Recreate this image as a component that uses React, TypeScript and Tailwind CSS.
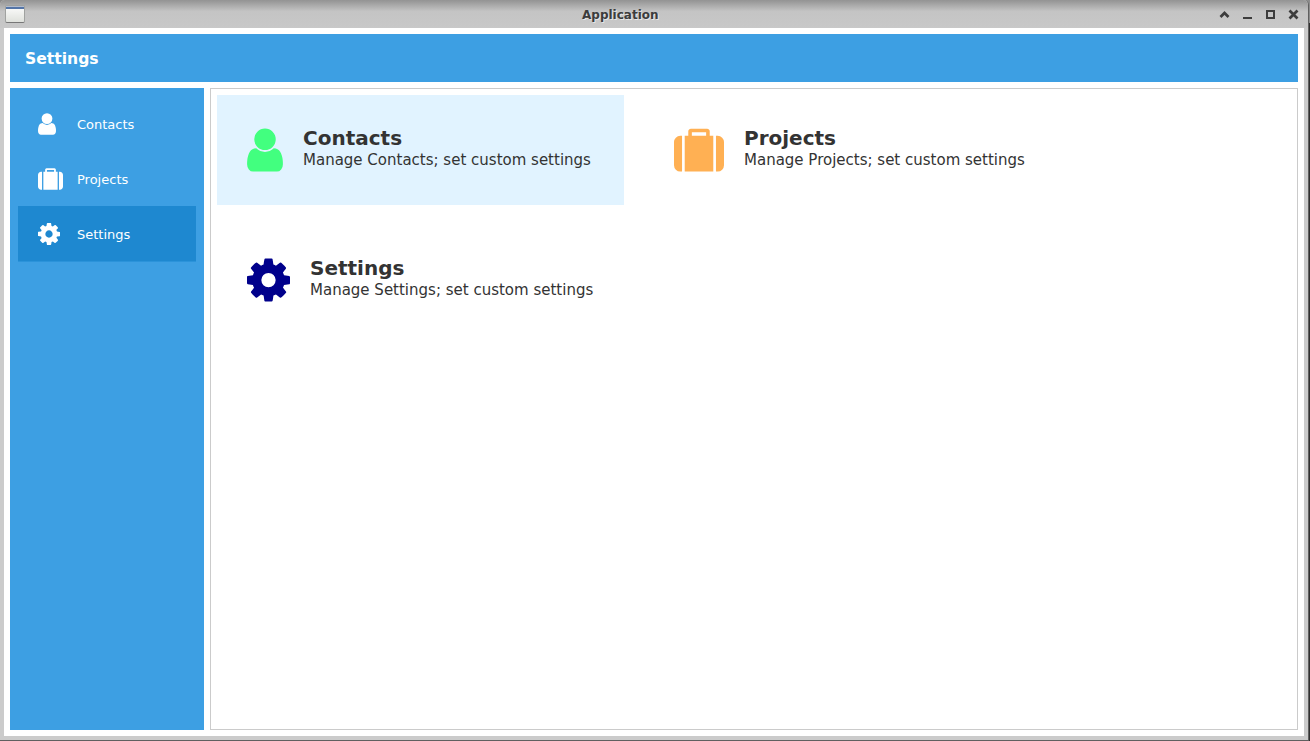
import type { ReactNode } from "react";

type IconName = "user" | "suitcase" | "cog";

const icons: Record<IconName, { viewBox: string; d: string; flip?: boolean }> = {
  user: {
    viewBox: "256 128 1280 1536",
    d: "M1536 1399q0 109-62.5 187t-150.5 78h-854q-88 0-150.5-78t-62.5-187q0-85 8.5-160.5t31.5-152 58.5-131 94-89 134.5-34.5q131 128 313 128t313-128q76 0 134.5 34.5t94 89 58.5 131 31.5 152 8.5 160.5zm-256-887q0 159-112.5 271.5t-271.5 112.5-271.5-112.5-112.5-271.5 112.5-271.5 271.5-112.5 271.5 112.5 112.5 271.5z",
  },
  suitcase: {
    viewBox: "0 0 1792 1536",
    flip: true,
    d: "M640 1152h512v128h-512v-128zM288 1152v-1280h-64q-92 0-158 66t-66 158v832q0 92 66 158t158 66h64zM1408 1152v-1280h-1024v1280h128v160q0 40 28 68t68 28h576q40 0 68-28t28-68v-160h128zM1792 928v-832q0-92-66-158t-158-66h-64v1280h64q92 0 158-66t66-158z",
  },
  cog: {
    viewBox: "128 128 1536 1536",
    d: "M1152 896q0-106-75-181t-181-75-181 75-75 181 75 181 181 75 181-75 75-181zm512-109v222q0 12-8 23t-20 13l-185 28q-19 54-39 91 35 50 107 138 10 12 10 25t-9 23q-27 37-99 108t-94 71q-12 0-26-9l-138-108q-44 23-91 38-16 136-29 186-7 28-36 28h-222q-14 0-24.5-8.5t-11.5-21.5l-28-184q-49-16-90-37l-141 107q-10 9-25 9-14 0-25-11-126-114-165-168-7-10-7-23 0-12 8-23 15-21 51-66.5t54-70.5q-27-50-41-99l-183-27q-13-2-21-12.5t-8-23.5v-222q0-12 8-23t19-13l186-28q14-46 39-92-40-57-107-138-10-12-10-24 0-10 9-23 26-36 98.5-107.5t94.5-71.5q13 0 26 10l138 107q44-23 91-38 16-136 29-186 7-28 36-28h222q14 0 24.5 8.5t11.5 21.5l28 184q49 16 90 37l142-107q9-9 24-9 13 0 25 10 129 119 165 170 7 8 7 22 0 12-8 23-15 21-51 66.5t-54 70.5q26 50 41 98l183 28q13 2 21 12.5t8 23.5z",
  },
};

function Icon({ name, className }: { name: IconName; className: string }) {
  const icon = icons[name];
  return (
    <svg viewBox={icon.viewBox} className={`shrink-0 overflow-visible fill-current ${className}`} aria-hidden="true">
      <path d={icon.d} transform={icon.flip ? "translate(0 1408) scale(1 -1)" : undefined} />
    </svg>
  );
}

function WindowButton({ label, children }: { label: string; children: ReactNode }) {
  return (
    <button aria-label={label} className="flex h-[11px] w-[11px] items-center justify-center text-[#3c3c3c]">
      <svg viewBox="0 0 11 11" className="h-[11px] w-[11px]" fill="none" stroke="currentColor" strokeWidth="2">
        {children}
      </svg>
    </button>
  );
}

function TitleBar() {
  return (
    <header className="flex h-7 shrink-0 items-center rounded-t-[5px] bg-linear-to-b from-[#939393] via-[#c4c4c4] via-40% to-[#c8c8c8] pr-[9px] pl-[5px]">
      <div className="flex w-[577px]">
        <div className="h-[18px] w-5 rounded-[2px] border border-[#a0a2a0] border-b-[#777] bg-linear-to-b from-[#fdfdfd] to-[#dfe1dc]">
          <div className="h-[3px] border-t border-[#b4bccb] bg-[#5475a8]" />
        </div>
      </div>
      <h1 className="grow pt-0.5 text-[12px] leading-4 font-bold text-[#3c3c3c] [text-shadow:1px_1px_0_#e6e6e6]">Application</h1>
      <div className="mt-px flex w-[80px] gap-3">
        <WindowButton label="Shade">
          <path d="M1.5 8 5.5 4 9.5 8" strokeWidth="2.7" />
        </WindowButton>
        <WindowButton label="Minimize">
          <path d="M1 9h9" />
        </WindowButton>
        <WindowButton label="Maximize">
          <path d="M2 2h7v7h-7z" />
        </WindowButton>
        <WindowButton label="Close">
          <path d="M1.5 1.5 9.5 9.5M9.5 1.5 1.5 9.5" strokeWidth="2.7" />
        </WindowButton>
      </div>
    </header>
  );
}

const navItems: { label: string; icon: IconName; size: string; active?: boolean }[] = [
  { label: "Contacts", icon: "user", size: "h-[22px] w-[18px]" },
  { label: "Projects", icon: "suitcase", size: "h-[22px] w-[25px]" },
  { label: "Settings", icon: "cog", size: "h-[22px] w-[22px]", active: true },
];

function Sidebar() {
  return (
    <nav className="w-[194px] shrink-0 bg-[#3d9fe3] px-2 pt-2">
      {navItems.map((item) => (
        <a
          key={item.label}
          className={`flex h-[55px] items-center pl-5 text-white ${item.active ? "box-content border-b border-[#2b93da] bg-[#1e88d0]" : ""}`}
        >
          <span className="flex w-[39px]">
            <Icon name={item.icon} className={item.size} />
          </span>
          <span className="pt-0.5 text-[13px] leading-4">{item.label}</span>
        </a>
      ))}
    </nav>
  );
}

const tiles: { title: string; icon: IconName; look: string; active?: boolean }[] = [
  { title: "Contacts", icon: "user", look: "h-[43px] w-[36px] text-[#42ff7f]", active: true },
  { title: "Projects", icon: "suitcase", look: "h-[43px] w-[50px] text-[#ffb053]" },
  { title: "Settings", icon: "cog", look: "h-[43px] w-[43px] text-[#00008b]" },
];

function Tile({ title, icon, look, active }: (typeof tiles)[number]) {
  return (
    <div className={`flex h-[110px] w-[407px] gap-5 pt-[34px] pl-[30px] ${active ? "bg-[#e1f3ff]" : ""}`}>
      <Icon name={icon} className={`-translate-y-[0.4px] ${look}`} />
      <div className="-mt-[3px] text-[#333] whitespace-nowrap">
        <h2 className="text-[20px] leading-6 font-bold">{title}</h2>
        <p className="pt-px text-[15px] leading-[18px]">Manage {title}; set custom settings</p>
      </div>
    </div>
  );
}

export default function App() {
  return (
    <div className="flex h-[741px] w-[1310px] bg-linear-to-b from-[#8c8c8c] from-[23px] to-[#303030] to-[23px] font-['DejaVu_Sans',sans-serif]">
      <div className="flex w-[1309px] flex-col rounded-t-[5px] border-r border-b border-[#606060] bg-[#cbcbcb]">
        <TitleBar />
        <div className="mr-1 mb-1 ml-1 flex grow flex-col gap-1.5 bg-white p-1.5">
          <div className="flex h-12 shrink-0 items-center bg-[#3d9fe3] pt-px pl-[15px] text-[15.6px] leading-5 font-bold text-white">Settings</div>
          <div className="flex grow gap-1.5">
            <Sidebar />
            <main className="grow border border-[#cbcbcb] p-1.5">
              <div className="grid grid-cols-[407px_407px] gap-5">
                {tiles.map((tile) => (
                  <Tile key={tile.title} {...tile} />
                ))}
              </div>
            </main>
          </div>
        </div>
      </div>
    </div>
  );
}
